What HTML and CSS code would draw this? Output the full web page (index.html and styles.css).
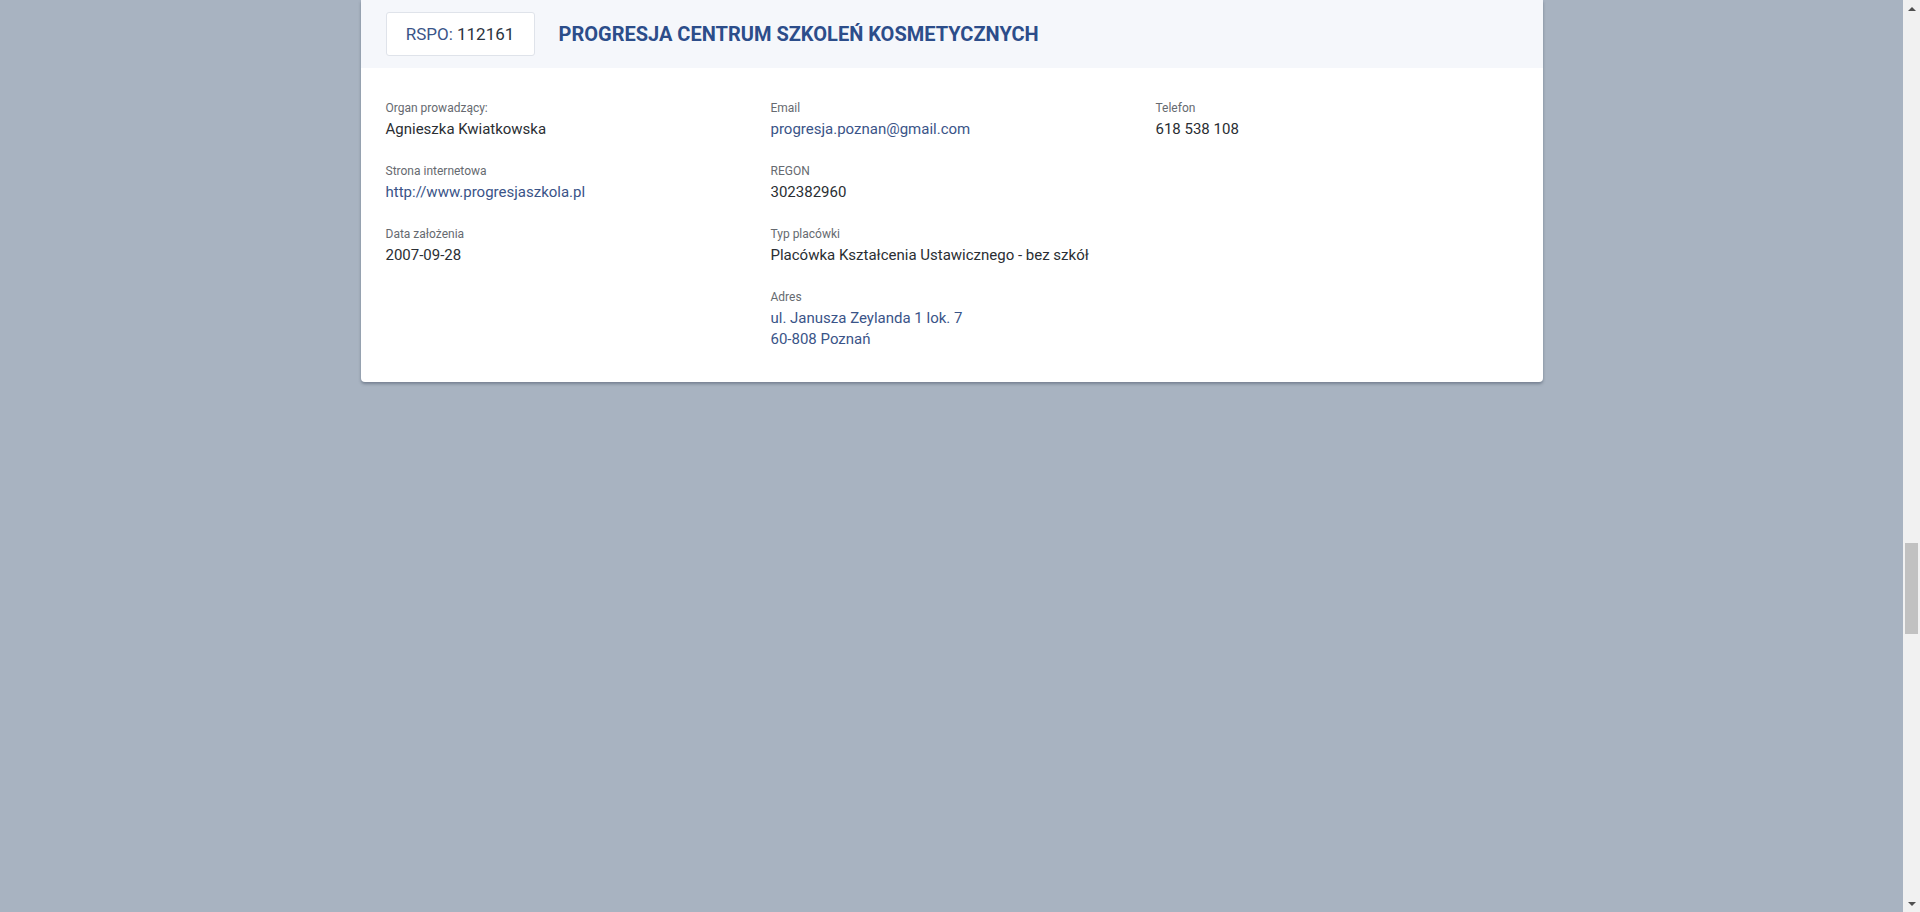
FILE: index.html
```html
<!DOCTYPE html>
<html lang="pl">
<head>
<meta charset="utf-8">
<title>Progresja Centrum Szkoleń Kosmetycznych</title>
<link rel="stylesheet" href="styles.css">
</head>
<body>
<div class="page">
  <main class="main">
    <section class="card">
      <header class="card-head">
        <div class="rspo"><span class="rspo-label">RSPO:</span> 112161</div>
        <h1 class="title">PROGRESJA CENTRUM SZKOLEŃ KOSMETYCZNYCH</h1>
      </header>
      <div class="card-body">
        <div class="col">
          <div class="item"><div class="label">Organ prowadzący:</div><div class="value">Agnieszka Kwiatkowska</div></div>
          <div class="item"><div class="label">Strona internetowa</div><div class="value link">http://www.progresjaszkola.pl</div></div>
          <div class="item"><div class="label">Data założenia</div><div class="value">2007-09-28</div></div>
        </div>
        <div class="col">
          <div class="item"><div class="label">Email</div><div class="value link">progresja.poznan@gmail.com</div></div>
          <div class="item"><div class="label">REGON</div><div class="value">302382960</div></div>
          <div class="item"><div class="label">Typ placówki</div><div class="value">Placówka Kształcenia Ustawicznego - bez szkół</div></div>
          <div class="item"><div class="label">Adres</div><div class="value link">ul. Janusza Zeylanda 1 lok. 7<br>60-808 Poznań</div></div>
        </div>
        <div class="col">
          <div class="item"><div class="label">Telefon</div><div class="value">618 538 108</div></div>
        </div>
      </div>
    </section>
  </main>
  <div class="scrollbar">
    <div class="sb-arrow sb-up"></div>
    <div class="sb-track"><div class="sb-thumb"></div></div>
    <div class="sb-arrow sb-down"></div>
  </div>
</div>
</body>
</html>
```
FILE: styles.css
```css
html, body {
  margin: 0;
  padding: 0;
  height: 100%;
  overflow: hidden;
}
body {
  background: #a8b3c1;
  font-family: Roboto, "Liberation Sans", Arial, sans-serif;
}
.page {
  display: flex;
  height: 912px;
}
.main {
  flex: 1;
  display: flex;
  justify-content: center;
  align-items: flex-start;
}
.card {
  width: 1182px;
  background: #ffffff;
  border-radius: 0 0 4px 4px;
  box-shadow: 0 2px 3px rgba(60, 70, 90, 0.45);
  overflow: hidden;
}
.card-head {
  background: #f5f7fb;
  height: 68px;
  display: flex;
  align-items: center;
  padding: 0 21px 0 25px;
  gap: 24px;
  box-sizing: border-box;
}
.rspo {
  box-sizing: border-box;
  height: 44px;
  width: 149px;
  background: #ffffff;
  border: 1px solid #dfe3ea;
  border-radius: 3px;
  display: flex;
  align-items: center;
  justify-content: center;
  font-size: 17px;
  color: #2c3440;
  white-space: pre;
}
.rspo-label {
  color: #3a5488;
}
.title {
  margin: 0;
  font-size: 20px;
  font-weight: 700;
  color: #2c4d8a;
  letter-spacing: 0;
}
.card-body {
  display: grid;
  grid-template-columns: repeat(3, 1fr);
  column-gap: 23px;
  padding: 32px 25px 9px;
}
.item {
  margin-bottom: 23px;
}
.label {
  font-size: 12px;
  line-height: 16px;
  color: #666a70;
  margin-bottom: 3px;
}
.value {
  font-size: 15px;
  line-height: 21px;
  color: #2a2e33;
}
.value.link {
  color: #3a5488;
}
.scrollbar {
  width: 17px;
  background: #f1f1f1;
  display: flex;
  flex-direction: column;
}
.sb-arrow {
  height: 17px;
  display: flex;
  align-items: center;
  justify-content: center;
}
.sb-up::before {
  content: "";
  border-left: 4px solid transparent;
  border-right: 4px solid transparent;
  border-bottom: 4px solid #505050;
}
.sb-down::before {
  content: "";
  border-left: 4px solid transparent;
  border-right: 4px solid transparent;
  border-top: 4px solid #505050;
}
.sb-track {
  flex: 1;
  padding-top: 526px;
}
.sb-thumb {
  margin: 0 2px;
  height: 91px;
  background: #c1c1c1;
}
```
